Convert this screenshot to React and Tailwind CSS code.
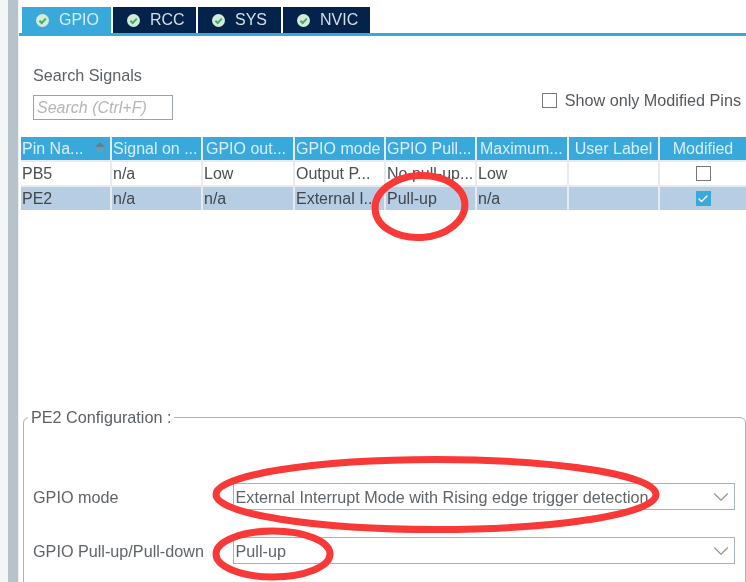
import * as React from 'react'
import { ChevronDown, Check } from 'lucide-react'

const tabs = ['GPIO', 'RCC', 'SYS', 'NVIC']
const columns = [
  'Pin Na...',
  'Signal on ...',
  'GPIO out...',
  'GPIO mode',
  'GPIO Pull...',
  'Maximum...',
  'User Label',
  'Modified'
]
const rows = [
  { cells: ['PB5', 'n/a', 'Low', 'Output P...', 'No pull-up...', 'Low', ''], modified: false },
  { cells: ['PE2', 'n/a', 'n/a', 'External I...', 'Pull-up', 'n/a', ''], modified: true }
]

function TabIcon() {
  return (
    <svg width="13" height="13" viewBox="0 0 13 13" className="shrink-0">
      <circle cx="6.5" cy="6.5" r="6.5" fill="#d3ecd9" />
      <path d="M3.4 6.7 L5.7 9 L9.8 4.6" fill="none" stroke="#3fae6b" strokeWidth="2" />
    </svg>
  )
}

function Tab({ label, active, width }) {
  return (
    <div
      className={`flex items-center gap-[10px] pl-[14px] h-[26px] text-[16px] ${width} ${
        active ? 'bg-[#39a9dc] text-[#d5ecf7]' : 'bg-[#03234b] text-[#d7dee6]'
      }`}
    >
      <TabIcon />
      <span>{label}</span>
    </div>
  )
}

function SelectBox({ value }) {
  return (
    <div className="flex items-center justify-between h-[27px] w-[502px] border border-[#a9b3b9] pl-[1.5px] text-[16.2px] text-[#5f6468]">
      <span className="pt-[1px]">{value}</span>
      <ChevronDown size={26} strokeWidth={1} className="text-[#8f9497]" />
    </div>
  )
}

export default function App() {
  return (
    <div className="relative flex h-[582px] w-[746px] overflow-hidden bg-white font-['Liberation_Sans',Arial,sans-serif] text-[#4b4f53] blur-[0.35px]">
      <div className="w-2 bg-[#f4f5f5]" />
      <div className="w-[10px] bg-[#b7c3cb]" />
      <div className="w-[1px] bg-[#eef1f2]" />
      <div className="flex-1 min-w-0">
        <div className="mt-[7px] flex gap-[2px] pl-[3px]">
          {tabs.map((tab, i) => (
            <Tab
              key={tab}
              label={tab}
              active={i === 0}
              width={['w-[89px]', 'w-[83px]', 'w-[83px]', 'w-[87px]'][i]}
            />
          ))}
        </div>
        <div className="h-[3px] bg-[#39a9dc]" />

        <div className="flex items-start justify-between pl-[14px] pr-[5px] pt-[29px]">
          <div>
            <div className="text-[16.2px] leading-[20px] text-[#5c6166]">Search Signals</div>
            <div className="mt-[10px] flex h-[25px] w-[140px] items-center border border-[#9aa3a9] px-[3px] text-[16px] italic text-[#b3b6b9]">
              Search (Ctrl+F)
            </div>
          </div>
          <label className="mt-[26px] flex items-center gap-2 text-[16.2px] leading-[18px] text-[#55595d]">
            <span className="h-[15px] w-[15px] border border-[#777]" />
            Show only Modified Pins
          </label>
        </div>

        <div className="mt-[17px] ml-[2px] grid grid-cols-[89px_89px_90px_89px_89px_90px_89px_86px] gap-[2px] bg-[#e8ebee] text-[16px]">
          {columns.map((col, i) => (
            <div
              key={col}
              className={`relative flex h-[23px] items-center whitespace-nowrap overflow-hidden bg-[#39a9dc] px-[1px] text-[#d8eef8] ${
                i > 5 ? 'justify-center' : ''
              } ${i === 2 || i === 5 ? 'pl-[3px]' : ''}`}
            >
              {col}
              {i === 0 && (
                <span className="absolute right-[5px] top-[5px] flex flex-col gap-[1px]">
                  <span className="h-0 w-0 border-x-[5px] border-b-[5px] border-x-transparent border-b-[#5f7f92]" />
                  <span className="h-0 w-0 border-x-[5px] border-t-[5px] border-x-transparent border-t-[#6d9bb5]" />
                </span>
              )}
            </div>
          ))}
          {rows.map((row) => (
            <React.Fragment key={row.cells[0]}>
              {row.cells.map((cell, i) => (
                <div
                  key={i}
                  className={`flex h-[23px] items-center whitespace-nowrap overflow-hidden px-[1px] ${
                    row.modified ? 'bg-[#b7cde4] text-[#40464c]' : 'bg-white text-[#4b4f53]'
                  }`}
                >
                  {cell}
                </div>
              ))}
              <div
                className={`flex h-[23px] items-center justify-center ${
                  row.modified ? 'bg-[#b7cde4]' : 'bg-white'
                }`}
              >
                {row.modified ? (
                  <span className="flex h-[15px] w-[15px] items-center justify-center bg-[#39a9dc]">
                    <Check size={12} strokeWidth={2.5} className="text-white" />
                  </span>
                ) : (
                  <span className="h-[15px] w-[15px] border border-[#777]" />
                )}
              </div>
            </React.Fragment>
          ))}
        </div>

        <div className="relative ml-[4px] mt-[207px] h-[200px] w-[723px] rounded-t-md border border-[#a9b3b9]">
          <span className="absolute -top-[10px] left-[4px] bg-white px-[3px] text-[16.2px] leading-[18px] text-[#5c6166]">
            PE2 Configuration :
          </span>
          <div className="grid grid-cols-[200px_auto] items-center gap-y-[27px] pl-[9px] pt-[65px]">
            <span className="pt-[1px] text-[16.2px] text-[#5f6468]">GPIO mode</span>
            <SelectBox value="External Interrupt Mode with Rising edge trigger detection" />
            <span className="pt-[1px] text-[16.2px] text-[#5f6468]">GPIO Pull-up/Pull-down</span>
            <SelectBox value="Pull-up" />
          </div>
        </div>
      </div>

      {/* hand drawn annotations on top of the screenshot */}
      <svg width="746" height="582" className="pointer-events-none absolute left-0 top-0">
        <g fill="none" stroke="#f93838" strokeWidth="7">
          <ellipse cx="420" cy="206.5" rx="45" ry="31" transform="rotate(-4 420 206.5)" />
          <ellipse cx="436" cy="494.5" rx="220" ry="35" />
          <ellipse cx="273" cy="554" rx="57" ry="23" />
        </g>
      </svg>
    </div>
  )
}
